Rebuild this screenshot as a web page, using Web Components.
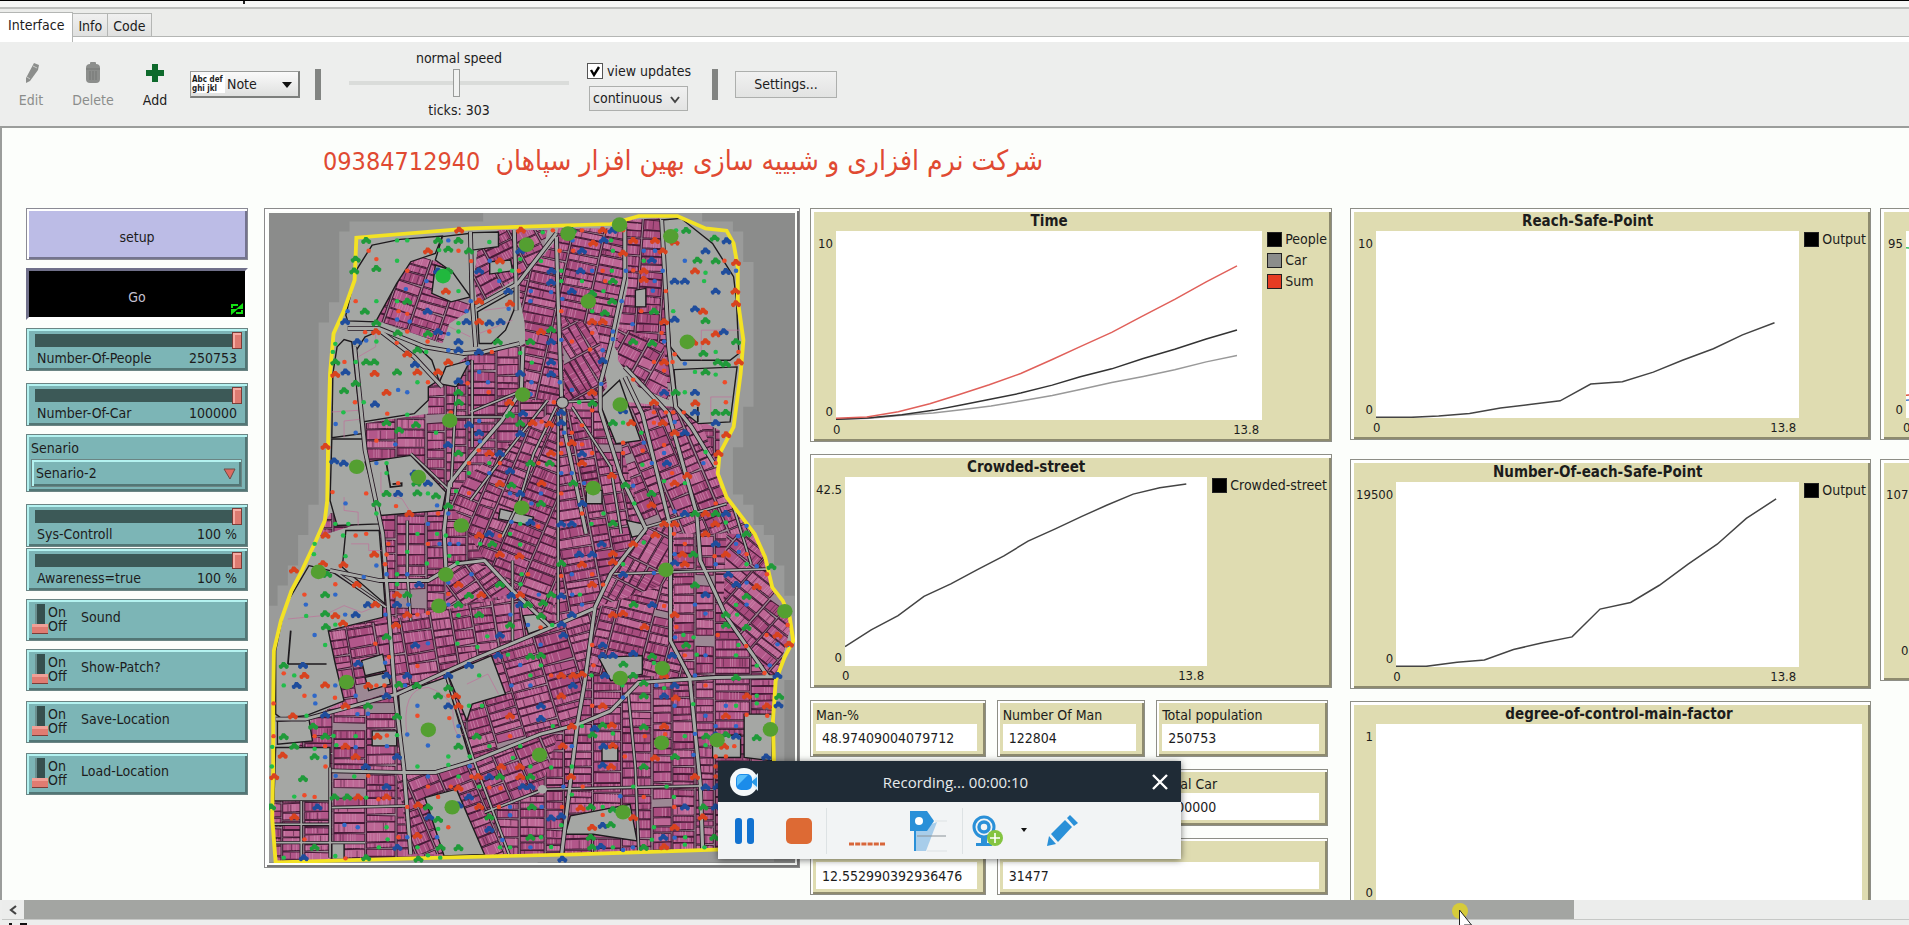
<!DOCTYPE html>
<html lang="en">
<head>
<meta charset="utf-8">
<title>NetLogo</title>
<style>
html,body{margin:0;height:100%}
body{overflow:hidden;background:#edeeed;color:#1c1c1c;font:14px/16px "DejaVu Sans Condensed","DejaVu Sans",sans-serif;font-stretch:condensed}
</style>
</head>
<body>
<nl-app></nl-app>
<script>
const define=(name,html,init)=>{
  const t=document.createElement('template');
  t.innerHTML='<style>*{box-sizing:border-box}button,select,input{font:inherit;color:inherit;margin:0;font-stretch:inherit}button{padding:0;border:0;background:none}select{appearance:none;border:0;border-radius:0;background:none;padding:0;outline:0}</style>'+html;
  customElements.define(name,class extends HTMLElement{
    connectedCallback(){
      if(this.shadowRoot)return;
      const r=this.attachShadow({mode:'open'});
      r.append(t.content.cloneNode(true));
      r.querySelectorAll('[data-t]').forEach(e=>{e.textContent=this.getAttribute(e.dataset.t)||''});
      if(init)init.call(this,r);
    }
  });
};

/* Tab strip */
define('nl-tabs',`<style>
:host{display:flex;align-items:flex-end;height:35px;padding-top:3px;position:relative;background:#ebecea;border-top:2px solid #bcbebc;border-bottom:0}
:host::after{content:"";position:absolute;left:0;right:0;bottom:0;height:5px;background:#fff;border-top:1px solid #b4b6b4}
button{height:25px;margin-bottom:4px;border:1px solid #b4b6b4;border-left:0;background:linear-gradient(#f0f0f0,#dfe0df);padding:0 5px}
button[aria-selected=true]{height:30px;margin:0;background:#fff;padding:0 8px 6px;position:relative;z-index:1;border-bottom:0}
</style><button role="tab" aria-selected="true">Interface</button><button role="tab">Info</button><button role="tab">Code</button>`);

/* Toolbar */
define('nl-toolbar',`<style>
:host{display:flex;align-items:center;height:86px;background:#edeeed;border-bottom:2px solid #9b9d9b;flex:none}
.tool{display:flex;flex-direction:column;align-items:center;gap:8px;width:62px;color:#8b8d8b;padding-top:2px}
.tool svg{width:22px;height:22px}
.tool.on{color:#1c1c1c}
.note{display:flex;align-items:center;width:110px;height:27px;margin-left:4px;border:1px solid #9a9c9a;border-right:2px solid #7d7f7d;border-bottom:2px solid #7d7f7d;background:linear-gradient(#fafafa,#dfe0df);position:relative}
.mini{font:bold 8px/9px "DejaVu Sans Condensed","DejaVu Sans",sans-serif;font-stretch:condensed;width:33px;background:#fff;margin-left:1px;white-space:nowrap}
.note select{flex:1;height:24px;padding-left:2px}
.tri{position:absolute;right:6px;top:10px;width:0;border:5px solid transparent;border-top:6px solid #111;pointer-events:none}
.sep{width:6px;height:31px;background:#828482}
.speed{display:flex;flex-direction:column;align-items:center;width:220px;margin:0 18px 0 28px}
.speed input{appearance:none;width:220px;height:28px;margin:3px 0 5px;background:linear-gradient(#dadcda,#dadcda) center/100% 4px no-repeat}
.speed input::-webkit-slider-thumb{appearance:none;width:7px;height:28px;border:1px solid #9a9c9a;background:#f1f2f1}
.upd{display:flex;flex-direction:column;gap:7px;width:104px;margin-right:21px;padding-top:5px}
.upd label{display:flex;align-items:center;gap:4px;white-space:nowrap}
.upd input{appearance:none;width:16px;height:16px;border:1px solid #555;background:#fff}
.upd input:checked{background:#fff url("data:image/svg+xml,%3Csvg xmlns='http://www.w3.org/2000/svg' viewBox='0 0 14 14'%3E%3Cpath d='M3 6l3 5 5-8' fill='none' stroke='%23000' stroke-width='2.4'/%3E%3C/svg%3E")}
.cont{position:relative;margin-left:2px;width:99px;height:25px;border:1px solid #adafad;background:linear-gradient(#f0f0f0,#e3e4e3)}
.cont select{width:100%;height:23px;padding-left:3px}
.cont svg{position:absolute;right:7px;top:9px;pointer-events:none}
.set{width:102px;height:27px;margin-left:17px;border:1px solid #adafad;background:linear-gradient(#f1f1f1,#e2e3e2)}
</style>
<button class="tool"><svg viewBox="0 0 22 22"><path d="M14 1l5 2-1 5-8 11-4 2 0-5z" fill="#8c8e8c"/><path d="M13 4l4 2M7 15l3 2" stroke="#c8cac8"/></svg>Edit</button>
<button class="tool"><svg viewBox="0 0 22 22"><rect x="8" y="0" width="6" height="3" rx="1" fill="#8c8e8c"/><rect x="4" y="2" width="14" height="19" rx="4" fill="#8c8e8c"/><path d="M4 7h14M8 9v9M11 9v9M14 9v9" stroke="#757775"/></svg>Delete</button>
<button class="tool on"><svg viewBox="0 0 22 22"><path d="M8 2h6v6h6v6h-6v6H8v-6H2V8h6z" fill="#0e6a2c"/></svg>Add</button>
<div class="note"><span class="mini">Abc def<br>ghi jkl</span><select aria-label="Widget type"><option>Note</option></select><i class="tri"></i></div>
<i class="sep" style="margin-left:15px"></i>
<div class="speed"><label for="sp">normal speed</label><input id="sp" type="range" min="0" max="100" value="49"><span>ticks: 303</span></div>
<div class="upd"><label><input type="checkbox" checked>view updates</label><div class="cont"><select aria-label="Update mode"><option>continuous</option></select><svg width="10" height="8" viewBox="0 0 10 8"><path d="M1 1l4 5 4-5" fill="none" stroke="#444" stroke-width="2"/></svg></div></div>
<i class="sep"></i><button class="set">Settings...</button>`);

/* Command button */
define('nl-button',`<style>
:host{display:block}
button{width:100%;height:52px;position:relative;background:#bcbce6;border:1px solid #8a8a94;box-shadow:inset 2px 2px #fff,inset -2px -2px #74748e;display:grid;place-items:center;padding-top:6px}
:host([down]) button{background:#000;color:#c4c0d2;border:3px solid #70708a;border-right-color:#fff;border-bottom-color:#fff;box-shadow:none}
svg{display:none;position:absolute;right:2px;bottom:2px}
:host([down]) svg{display:block}
</style><button><span data-t="label"></span><svg width="12" height="12" viewBox="0 0 12 12"><path d="M1 5V2h6M11 7v3H5" fill="none" stroke="#14e014" stroke-width="2"/><path d="M5 6h7V0zM0 12V6h7z" fill="#14e014"/></svg></button>`);

const teal='background:#7cb5b6;border:1px solid #6b8584;box-shadow:inset 2px 2px #b4f2f0,inset -2px -2px #527675;';
/* Slider */
define('nl-slider',`<style>
:host{display:block;height:43px;${teal}padding:3px 5px 0 8px}
input{appearance:none;display:block;width:100%;height:17px;background:linear-gradient(#3c5957,#3c5957) 0 2px/100% 13px no-repeat}
input::-webkit-slider-thumb{appearance:none;width:10px;height:17px;background:#dd7a70;border:1px solid #7a3d38;box-shadow:inset 2px 2px #f6aba2}
label{display:flex;justify-content:space-between;padding:1px 5px 0 2px}
</style><input id="r" type="range" value="100"><label for="r"><span data-t="label"></span><span data-t="value"></span></label>`);

/* Chooser */
define('nl-chooser',`<style>
:host{display:block;height:58px;${teal}padding:5px 5px 4px 4px}
.b{position:relative;height:28px;margin-top:3px;border:1px solid #6b8584;box-shadow:inset 2px 2px #b4f2f0,inset -2px -2px #527675}
label{display:block}select{width:100%;height:26px;padding-left:4px}
svg{position:absolute;right:5px;top:8px;pointer-events:none}
</style><label for="s" data-t="label"></label><div class="b"><select id="s"><option data-t="value"></option></select><svg width="13" height="12" viewBox="0 0 13 12"><path d="M1 1h11l-5 10z" fill="#dc6c62" stroke="#6d4a46"/></svg></div>`);

/* On/off switch */
define('nl-switch',`<style>
:host{display:block;height:42px;${teal}}
label{display:flex;height:100%;padding:4px 5px}
input{appearance:none;width:16px;height:31px;background:linear-gradient(#7a3d38,#7a3d38) 0 29px/16px 1px no-repeat,linear-gradient(#f0a097 3px,#e07c72 3px) 0 20px/16px 10px no-repeat,linear-gradient(90deg,#6b9090 2px,#36504e 2px) 3px 0/10px 28px no-repeat}
.o{line-height:14px;width:33px;padding-top:1px}.n{padding-top:5px}
</style><label><input type="checkbox"><span class="o">On<br>Off</span><span class="n" data-t="label"></span></label>`);

/* Plot */
define('nl-plot',`<style>
:host{display:grid;grid-template:22px 1fr 21px/auto 1fr auto;background:#dfdcb1;border:1px solid #8d8e86;box-shadow:inset 3px 3px #fff,inset -2px -2px #8e8b6f;padding:0 3px}
h2{grid-area:1/2;margin:3px 0 0;font:bold 15px/18px "DejaVu Sans Condensed","DejaVu Sans",sans-serif;font-stretch:condensed;text-align:center;white-space:nowrap;justify-self:center;width:0;display:flex;justify-content:center}
.y{grid-area:2/1;display:flex;flex-direction:column;justify-content:space-between;text-align:right;min-width:22px;padding:5px 3px 0 2px;font-size:13px}
svg{grid-area:2/2;width:100%;height:100%;min-height:0;background:#fff;display:block}
.x{grid-area:3/2;display:flex;justify-content:space-between;padding:2px 3px 0 0;font-size:13px}
.x span:first-child{margin-left:-3px}
.l{grid-area:2/3;min-width:5px}
.l div{display:flex;align-items:center;gap:3px;height:21px;padding:0 1px 5px 5px;line-height:16px}
i{width:15px;height:15px;border:1px solid #222;flex:none}
b{font-weight:normal}
polyline{fill:none;stroke-width:1.5;vector-effect:non-scaling-stroke}
</style><h2 data-t="label"></h2><div class="y"><span data-t="ymax"></span><span>0</span></div><svg preserveAspectRatio="none"></svg><div class="x"><span>0</span><span data-t="xmax"></span></div><div class="l"></div>`,
function(r){
  const s=r.querySelector('svg');s.setAttribute('viewBox',this.getAttribute('box')||'0 0 10 10');
  if(!this.hasAttribute('xmax'))r.querySelector('.x').replaceChildren();
  s.innerHTML=(this.getAttribute('lines')||'').split(';').filter(Boolean).map(l=>{const[c,p]=l.split('|');return `<polyline stroke="${c}" points="${p}"/>`}).join('');
  r.querySelector('.l').innerHTML=(this.getAttribute('legend')||'').split(';').filter(Boolean).map(l=>{const[n,c]=l.split('|');return `<div><i style="background:${c}"></i><b>${n}</b></div>`}).join('');
});

/* Monitor */
define('nl-monitor',`<style>
:host{display:block;height:57px;background:#dfdcb1;border:1px solid #8d8e86;box-shadow:inset 2px 2px #fff,inset -2px -2px #8e8b6f;padding:6px 8px 0 5px;min-width:0}
label{display:block;height:17px}
output{display:block;height:27px;background:#fff;padding:6px 6px 5px}
</style><label for="o" data-t="label"></label><output id="o" data-t="value"></output>`);

/* World view with the street map */
define('nl-view',`<style>
:host{display:block;height:660px;border:1px solid #8b8b8b;box-shadow:inset 2px 2px #fff,inset -2px -2px #777;padding:4px}
svg{display:block;width:100%;height:100%;background:#8b8c8b}
</style><svg viewBox="26 39 1499 1947" preserveAspectRatio="none" role="img" aria-label="World view"></svg>`,
function(r){
  let seed=7;const rnd=()=>(seed=(seed*16807)%2147483647)/2147483647;
  const edge=[[275,113],[270,240],[240,330],[210,400],[200,520],[195,700],[192,900],[185,960],[160,1020],[120,1110],[90,1170],[60,1260],[40,1350],[38,1500],[38,1700],[35,1850],[45,1984],[440,1972],[900,1960],[1300,1946],[1462,1940],[1465,1680],[1462,1560],[1470,1440],[1495,1370],[1520,1320],[1510,1250],[1490,1200],[1460,1160],[1440,1070],[1410,1000],[1330,890],[1305,820],[1310,760],[1350,680],[1370,520],[1378,420],[1362,300],[1362,200],[1350,130],[1330,92],[1270,85],[1190,48],[1080,48],[1000,72],[600,85]];
  const inside=(x,y,p)=>{let c=false;for(let i=0,j=p.length-1;i<p.length;j=i++){const[a,b]=p[i],[d,e]=p[j];if((b>y)!=(e>y)&&x<(d-a)*(y-b)/(e-b)+a)c=!c}return c};
  const near=(x,y)=>[[0,0],[30,0],[-30,0],[0,30],[0,-30]].some(([a,b])=>inside(x+a,y+b,edge));
  const E=edge.join(' ');
  let out='';
  /* patches around the border */
  let h='';for(let x=26;x<1525;x+=29.3)for(let y=39;y<1986;y+=30.3)if(near(x+15,y+15))h+=`M${x-5} ${y-5}h38v40h-38z`;
  out+=`<path d="${h}" fill="#9a9b9a"/><clipPath id="c"><polygon points="${E}"/></clipPath><g clip-path="url(#c)"><polygon points="${E}" fill="#a5a7a4"/>`;
  /* city blocks: polygon, street angle, row height */
  const regions=[
   ['290,670 480,640 480,560 600,460 740,440 850,370 860,600 1000,600 1180,620 1310,690 1310,860 1520,1250 1470,1440 1462,1950 40,1990 40,1800 150,1550 240,1500 195,1290 350,1250 340,950 160,1010 200,940 300,900',0,24],
   ['680,90 820,90 800,190 740,230 620,310 610,240 620,150',-27,24],
   ['850,85 1040,85 1040,240 1000,440 960,570 870,600 760,600 755,370 740,290 740,250 845,120',12,24],
   ['1045,60 1140,55 1165,400 1170,590 1080,560 1010,440 1050,250',4,24],
   ['400,150 520,190 600,290 600,330 540,370 520,430 330,360 370,250',18,24],
   ['860,350 960,380 990,560 960,600 870,600',60,20],
   ['1020,380 1150,430 1165,600 1080,560 1020,480',28,26],
   ['860,610 860,990 830,1260 720,1150 640,1080 540,900 600,820',22,24],
   ['870,620 1010,800 1090,980 1000,1120 950,1230 840,1270 850,700',-10,24],
   ['970,620 1180,630 1250,650 1300,780 1310,860 1420,1000 1180,1000 1090,980 1030,730',-22,26],
   ['1100,980 1180,980 1180,1300 960,1230 1000,1120',-62,26],
   ['960,1220 1160,1150 1180,1330 1220,1430 940,1420',14,24],
   ['1330,1000 1420,1000 1520,1250 1470,1440 1320,1230',40,26],
   ['530,1100 600,1080 700,1130 820,1250 720,1180 530,1220',-35,22],
   ['195,1290 720,1190 830,1270 700,1340 530,1420 150,1550 240,1500',-9,26],
   ['660,1360 830,1280 950,1230 910,1560 600,1680 590,1510',-16,25],
   ['390,1720 610,1690 800,1600 850,1600 800,1770 650,1830 700,1960 430,1960',-22,26],
  ];
  regions.forEach(([p,a,rh],i)=>{
    const pts=p.split(' ').map(q=>q.split(',').map(Number)),xs=pts.map(q=>q[0]),ys=pts.map(q=>q[1]);
    const x0=Math.min(...xs),x1=Math.max(...xs),y0=Math.min(...ys),y1=Math.max(...ys);
    const cx=(x0+x1)/2,cy=(y0+y1)/2,R=Math.hypot(x1-cx,y1-cy)+30;
    const t=a*Math.PI/180,C=Math.cos(t),S=Math.sin(t),P=['','',''];let lots='',fine='';
    /* columns of lots between cross streets; each column has its own row heights */
    for(let x=-R;x<R;){
      const w=46+rnd()*60;
      for(let y=-R;y<R;){
        const hh=rh*(.75+rnd()*.6),X=cx+(x+w/2)*C-(y+hh/2)*S,Y=cy+(x+w/2)*S+(y+hh/2)*C;
        if(rnd()<.985&&X>x0-60&&X<x1+60&&Y>y0-60&&Y<y1+60){
          const sk=(rnd()*6-3).toFixed();
          P[Math.floor(rnd()*3)]+=`M${x.toFixed()} ${y.toFixed()}l${(w-6).toFixed()} ${sk}v${(hh-3).toFixed()}l-${(w-6).toFixed()} ${-sk}z`;
          for(let k=x+5;k<x+w-8;k+=6+rnd()*4){const s=`M${k.toFixed()} ${(y+2).toFixed()}v${(hh-7).toFixed()}`;if(rnd()>.5)lots+=s;else if(rnd()>.7)fine+=s}
        }
        y+=hh;
      }
      x+=w;
    }
    out+=`<clipPath id="r${i}"><polygon points="${p}"/></clipPath><g clip-path="url(#r${i})"><polygon points="${p}" fill="#9c8894"/><g transform="translate(${cx} ${cy}) rotate(${a})" stroke="#451a36" stroke-width="3">`
      +P.map((d,k)=>`<path d="${d}" fill="${['#b2578a','#bd6795','#a84c7e'][k]}"/>`).join('')+`<path d="${lots}" stroke="#cc88ad" stroke-width="2"/><path d="${fine}" stroke="#5c2748" stroke-width="2"/></g></g>`;
  });
  /* open ground */
  const open=['1145,60 1200,55 1290,130 1350,230 1358,300 1365,460 1340,480 1200,480 1170,440','1180,508 1360,500 1340,665 1250,670 1190,620','965,600 1025,540 1085,720 1015,730','320,135 400,118 520,108 500,160 430,185 390,250 330,365 250,362 245,345 275,210','620,335 730,270 728,320 700,390 660,430 625,430','300,410 345,390 440,430 490,480 510,540 480,560 480,600 440,640 292,665 275,450','220,440 240,418 262,425 290,700 205,712 208,520','205,716 295,716 340,970 220,975 200,900','300,785 430,765 530,875 520,930 345,945','520,110 600,100 600,290 540,210 500,180','605,98 680,96 680,140 605,150','500,195 545,210 600,290 545,305 490,280','245,990 340,990 357,1210 235,1100','140,1095 200,1110 350,1215 350,1250 195,1290 215,1390 240,1500 130,1545 60,1552 45,1540 45,1350 70,1220','290,1380 350,1360 360,1410 300,1425','300,1430 365,1415 372,1450 310,1470','395,1480 530,1430 600,1680 500,1710 410,1710','535,1420 660,1365 700,1480 605,1510 590,1560','45,1640 200,1640 200,1800 40,1800','50,1562 140,1555 150,1620 50,1630','470,1790 560,1765 640,1960 525,1965','885,1845 1055,1810 1075,1920 950,1900 870,1900','965,1370 1090,1365 1090,1420 1000,1440','1290,1610 1370,1600 1370,1670 1290,1670','1380,1540 1460,1540 1460,1680 1380,1670','685,925 780,950 770,975 680,955','930,870 975,870 975,910 930,910','750,1245 800,1240 830,1275 765,1300','1045,960 1090,970 1100,1000 1060,1010','320,1590 390,1590 390,1635 320,1635','655,185 715,180 720,212 655,222','975,1640 1020,1640 1020,1680 975,1680','530,500 600,480 560,560 510,550','1070,270 1100,265 1100,320 1070,320','205,1925 240,1925 240,1975 205,1975'];
  out+=open.map(p=>`<polygon points="${p}" fill="#a5a7a4" stroke="#1d1a1d" stroke-width="4"/>`).join('');
  out+=`<g fill="none" stroke="#c0709a" stroke-width="2"><path d="M280 470L330 440V390M1258 480V390H1370M1285 660V590H1345M205 635l75-5M240 712v-50l45-5M240 890v40l40 5v40M625 400l95-40M640 330l80-10M80 1255l100-10 60-30 50 20 60-25M260 1030h50v20h40M420 1610q-20-150 60-150q80 30 70 100q10 60 30 40M590 1450l60-30 30 60M345 815v60l60 20 30 50M540 380l60 30"/></g><path d="M360 785l12 75 32-4v-8l-26 3M80 1390l8-100M80 1390h110M1248 620v45" fill="none" stroke="#1d1a1d" stroke-width="5"/>`;
  /* roads */
  const roads=['845,100 735,250 615,320','600,95 605,300 615,440','725,90 730,250 730,330','845,110 850,300 860,600','1040,80 1040,230 1000,430 970,550 970,630 1030,830 1100,985 1000,1120 955,1220 925,1450 905,1570 860,1960','1145,60 1165,440 1185,620 1230,680 1300,800','1040,500 1130,600 1165,640 1245,940 1255,1080 1330,1250 1450,1430','1040,530 1090,640 1170,980 1170,1320 1225,1430 1255,1750 1262,1950','750,440 745,570 690,660 600,770 540,850 525,990 530,1100','865,610 870,700 900,850 930,1000','250,385 340,385 470,440 580,460 640,455 740,430','340,390 440,470 520,560','270,440 300,750 350,1000 365,1200 385,1480 410,1700 430,1960','200,1110 340,1140 480,1140 560,1090 640,1080 720,1170 830,1280','45,1555 130,1555 390,1480 600,1380 830,1280 950,1225','205,1710 410,1715 500,1715 610,1680 800,1600 910,1570 1000,1530 1080,1445 1300,1430 1470,1428','530,1420 610,1680 710,1960','1050,1480 1070,1700 1080,1960','200,1700 200,1970','810,1765 1260,1755','640,1835 800,1770','1010,1120 1460,1105','1100,980 1330,910','210,1110 360,1220','605,480 605,740','600,635 750,570','540,650 690,650','865,605 960,600','430,760 540,870','560,560 545,860','720,1080 720,1320','40,1870 200,1870','118,1800 118,1980','205,1820 420,1815','45,1925 300,1925','845,620 780,760 740,900 690,1010','820,600 700,760 600,900','850,640 850,1260','890,620 1000,800 1030,1000','420,960 420,1120 430,1260','1350,920 1400,1090'];
  for(const[c,w]of[['#241822',14],['#a8aaa7',9]])out+=`<g fill="none" stroke="${c}" stroke-linejoin="round">`+roads.map((p,i)=>`<polyline points="${p}" stroke-width="${i<16?w:w-4}"/>`).join('')+'</g>';
  out+=`<circle cx="862" cy="607" r="17" fill="#a8aaa7" stroke="#241822" stroke-width="3"/><circle cx="805" cy="1765" r="13" fill="#a8aaa7"/></g>`;
  out+=`<polygon points="${E}" fill="none" stroke="#f3e224" stroke-width="11"/>`;
  /* agents */
  out+=`<defs><g id="k"><path d="M-14 6v-6l6-3 3-7h8l5 6 6 4v6z"/><circle cx="-8" cy="6" r="5"/><circle cx="8" cy="6" r="5"/></g></defs>`;
  const car=['#d8431f','#209a3a','#1f4d9c'],dot=['#ee4c2a','#22bd4b','#2f68c8'];
  for(let x=39;x<1515;x+=29.3)for(let y=91;y<1985;y+=30.3){
    if(!inside(x,y,edge))continue;
    const v=rnd(),k=Math.floor(rnd()*3),j=rnd()>.6?rnd()*16-8:0,q=rnd()>.6?rnd()*16-8:0;
    if(v<.17)out+=`<use href="#k" x="${(x+j).toFixed()}" y="${(y+q).toFixed()}" fill="${car[k]}"/>`;
    else if(v<.36)out+=`<circle cx="${(x+j).toFixed()}" cy="${(y+q).toFixed()}" r="6.5" fill="${dot[k]}"/>`;
  }
  [[97,1108,0],[568,90,0],[744,90,0],[187,738,0],[215,522,0],[1458,1098,1],[1480,1487,1],[1478,1512,2],[452,1974,1],[862,1974,2],[41,1727,0],[1508,1330,0],[1330,122,2]].forEach(([x,y,k])=>out+=`<use href="#k" x="${x}" y="${y}" fill="${car[k]}"/>`);
  out+='<g fill="#549f31">'+[[760,134],[878,101],[1025,74],[1171,109],[936,304],[1218,425],[749,583],[541,661],[1027,613],[276,799],[452,830],[746,922],[950,863],[574,975],[167,1114],[530,1122],[510,1216],[1157,1108],[1496,1232],[247,1444],[1147,1403],[1027,1432],[480,1587],[797,1662],[1145,1626],[1303,1618],[1455,1586],[548,1819],[1035,1834]].map(([x,y])=>`<circle cx="${x}" cy="${y}" r="22"/>`).join('')+'<circle cx="522" cy="228" r="22" fill="#21b83e"/></g>';
  r.querySelector('svg').innerHTML=out;
});

/* Floating screen recorder */
define('screen-recorder',`<style>
:host{display:block;position:absolute;left:718px;top:761px;width:463px;box-shadow:0 1px 7px #0008;z-index:5;font-family:"Open Sans","Noto Sans",sans-serif;font-stretch:normal}
header{display:flex;align-items:center;height:41px;background:#1f2b36;color:#e6eaec;padding:0 12px;font-size:15px}
header span{flex:1;text-align:center}
main{display:flex;align-items:center;height:57px;background:#f2f4f5}
button{display:grid;place-items:center}
svg{display:block}
.s{width:1px;height:46px;background:#dde2e4}
</style><header><svg width="30" height="30" viewBox="0 0 30 30"><circle cx="14" cy="15" r="14" fill="#f4f8fa"/><path d="M19 15l9-9v18z" fill="#d9eef9"/><path d="M21 15l6-5v10z" fill="#2a9ae8"/><rect x="6" y="7" width="16" height="16" rx="5" fill="#1b8cea"/><path d="M7 12q0-4 4-4h7L7 19z" fill="#5bc0fa"/></svg><span>Recording... 00:00:10</span><button aria-label="Close"><svg width="18" height="18" viewBox="0 0 18 18"><path d="M2 2l14 14M16 2L2 16" stroke="#fff" stroke-width="2.4"/></svg></button></header>
<main><button aria-label="Pause" style="width:54px"><svg width="20" height="26"><rect width="7" height="26" rx="3" fill="#1272d0"/><rect x="12" width="7" height="26" rx="3" fill="#1272d0"/></svg></button>
<button aria-label="Stop" style="width:54px"><svg width="26" height="26"><rect width="26" height="26" rx="5" fill="#dd6a34"/></svg></button><i class="s"></i>
<svg width="80" height="46" style="padding-left:22px"><path d="M0 36h36" stroke="#d8663a" stroke-width="3" stroke-dasharray="5 1.2"/></svg>
<button aria-label="Marker"><svg width="42" height="42" viewBox="0 0 42 42"><path d="M9 20L30 12 19 41H9z" fill="#a8cdea"/><path d="M3 1h17l7 10-7 10H3z" fill="#2a90d8"/><circle cx="12" cy="11" r="4" fill="#fff"/><path d="M8 20v21" stroke="#2a90d8" stroke-width="2"/><path d="M10 26h29" stroke="#8a9298"/><path d="M20 41h20M28 11h12" stroke="#dde2e4"/></svg></button>
<i class="s" style="margin-left:13px"></i>
<button aria-label="Webcam" style="width:50px"><svg width="32" height="33" viewBox="0 0 32 33"><circle cx="12" cy="13" r="10" fill="none" stroke="#2a90d8" stroke-width="3"/><circle cx="12" cy="13" r="5" fill="none" stroke="#2a90d8" stroke-width="3.5"/><path d="M4 32v-3h5v-5h6v5h5v3z" fill="#2a90d8"/><circle cx="23" cy="24" r="8" fill="#84c441"/><path d="M23 19v10M18 24h10" stroke="#fff" stroke-width="1.6"/></svg></button>
<svg width="6" height="5" style="margin:0 19px 0 8px"><path d="M0 0h6L3 4z" fill="#111"/></svg>
<button aria-label="Draw"><svg width="32" height="32" viewBox="0 0 32 32"><path d="M1 31l2-10 7 8z" fill="#2a90d8"/><path d="M5 19L19 5l7 7-14 15z" fill="#2a90d8"/><path d="M21 3l3-3 8 8-4 3z" fill="#2a90d8"/></svg></button></main>`);

/* Horizontal scroll bar and the strip below */
define('nl-scroll',`<style>
:host{display:block;flex:none;height:25px;background:#edeeed;position:relative}
.b{display:flex;height:20px;background:#ecedec;border-bottom:1px solid #c6c8c6;margin-left:2px}
button{width:22px;display:grid;place-items:center}
.t{width:1550px;max-width:82%;background:#a3a5a2;height:19px}
.cur{position:absolute;left:1451px;top:2px}
.clip{position:absolute;left:7px;bottom:0}
</style><div class="b"><button aria-label="Scroll left"><svg width="8" height="10" viewBox="0 0 8 10"><path d="M7 1L2 5l5 4" fill="none" stroke="#444" stroke-width="2.2"/></svg></button><div class="t"></div></div>
<svg class="clip" width="22" height="2"><path d="M2 0h3v2H2zM13 0h7v2h-7z" fill="#111"/></svg>
<svg class="cur" width="24" height="23" viewBox="0 0 24 23"><circle cx="9" cy="9" r="8" fill="#d6cb3a"/><path d="M8.500 8v19l5-4h7z" fill="#fff" stroke="#222"/></svg>`);

define('nl-app',`<style>
:host{display:flex;flex-direction:column;height:100vh;min-height:0}
.top{flex:none;height:7px;background:#f6f7f6;border-top:1px solid #000}
.top i{display:block;width:2px;height:3px;margin-left:243px;background:#222}
.canvas{flex:1;min-height:0;overflow:hidden;background:#fcfefb;border-left:2px solid #9b9d9b}
h1{margin:0;height:80px;width:fit-content;padding-left:321px;font-weight:normal;font-size:28px;line-height:66px;color:#e04a32;white-space:pre}
h1 span{font-size:25px}
.board{display:flex;align-items:flex-start;padding-left:24px}
.c{display:flex;flex-direction:column;min-width:0}
.c1{flex:222 1 0;margin-right:16px}.c2{flex:536 1 0;margin-right:10px}.c3{flex:522 1 0}.c4{flex:521 1 0}.c3{margin-right:18px}.c4{margin-right:9px}
.c5{flex:0 0 29px;overflow:hidden}.c5 nl-plot{width:520px}
.g8{margin-bottom:8px}.g10{margin-bottom:10px}.g12{margin-bottom:12px}.g1{margin-bottom:1px}.g19{margin-bottom:19px}
.h234{height:234px}.h230{height:230px}.h232{height:232px}.h222{height:222px}
.mon{display:grid;grid-template-columns:175fr 148fr 171fr;gap:12px 11px;padding-right:4px}
.third{grid-column:3}.wide{grid-column:2/4}
</style>
<div class="top"><i></i></div>
<nl-tabs></nl-tabs><nl-toolbar></nl-toolbar>
<div class="canvas">
<h1 lang="fa"><bdi dir="rtl">شرکت نرم افزاری و شبییه سازی بهین افزار سپاهان <span> 09384712940</span></bdi></h1>
<div class="board">
<div class="c c1">
<nl-button label="setup" class="g8"></nl-button><nl-button label="Go" down class="g8"></nl-button>
<nl-slider label="Number-Of-People" value="250753" class="g12"></nl-slider>
<nl-slider label="Number-Of-Car" value="100000" class="g8"></nl-slider>
<nl-chooser label="Senario" value="Senario-2" class="g12"></nl-chooser>
<nl-slider label="Sys-Controll" value="100 %" class="g1"></nl-slider>
<nl-slider label="Awareness=true" value="100 %" class="g8"></nl-slider>
<nl-switch label="Sound" class="g8"></nl-switch><nl-switch label="Show-Patch?" class="g10"></nl-switch>
<nl-switch label="Save-Location" class="g10"></nl-switch><nl-switch label="Load-Location"></nl-switch>
</div>
<div class="c c2"><nl-view></nl-view></div>
<div class="c c3">
<nl-plot class="h234 g12" label="Time" ymax="10" xmax="13.8" legend="People|#000;Car|#8b8d8b;Sum|#e63c22" box="102 93 1218 569" lines="#999|102,660 200,657 290,648 380,641 460,631 545,620 630,605 720,588 800,570 890,549 980,531 1070,511 1160,487 1248,468;#333|102,660 190,656 290,646 380,633 460,617 550,598 630,581 720,557 800,532 890,508 980,477 1070,449 1160,418 1248,391;#e0605a|102,657 190,653 280,637 370,613 450,587 540,556 630,522 720,480 800,441 890,398 975,351 1070,299 1160,246 1248,198"></nl-plot>
<nl-plot class="h234 g12" label="Crowded-street" ymax="42.5" xmax="13.8" legend="Crowded-street|#000" box="131 110 1023 575" lines="#444|131,626 205,575 281,532 354,473 430,435 505,392 580,350 648,305 725,268 800,230 870,196 945,162 1020,143 1095,131"></nl-plot>
<div class="mon">
<nl-monitor label="Man-%" value="48.97409004079712"></nl-monitor><nl-monitor label="Number Of Man" value="122804"></nl-monitor><nl-monitor label="Total population" value="250753"></nl-monitor>
<nl-monitor class="third" label="Total Car" value="100000"></nl-monitor>
<nl-monitor label="" value="12.552990392936476"></nl-monitor><nl-monitor class="wide" label="" value="31477"></nl-monitor>
</div>
</div>
<div class="c c4">
<nl-plot class="h232 g19" label="Reach-Safe-Point" ymax="10" xmax="13.8" legend="Output|#000" box="98 93 1163 567" lines="#444|98,658 195,658 270,654 355,646 440,630 520,619 604,608 688,557 775,550 860,521 940,485 1025,450 1105,408 1193,371"></nl-plot>
<nl-plot class="h230 g12" label="Number-Of-each-Safe-Point" ymax="19500" xmax="13.8" legend="Output|#000" box="152 126 1108 559" lines="#444|152,683 235,683 320,671 395,664 475,632 555,612 636,594 713,510 797,490 876,438 955,374 1035,314 1115,236 1197,177"></nl-plot>
<nl-plot class="h222" label="degree-of-control-main-factor" ymax="1"></nl-plot>
</div>
<div class="c c5">
<nl-plot class="h232 g19" ymax="95" xmax="13.8" box="0 0 490 189" lines="#35c060|0,17 20,19;#e0503c|0,166 20,165;#4a78c8|0,171 20,170"></nl-plot>
<nl-plot class="h222" ymax="107"></nl-plot>
</div>
</div>
</div>
<nl-scroll></nl-scroll>
<screen-recorder></screen-recorder>`);
</script>
</body>
</html>
